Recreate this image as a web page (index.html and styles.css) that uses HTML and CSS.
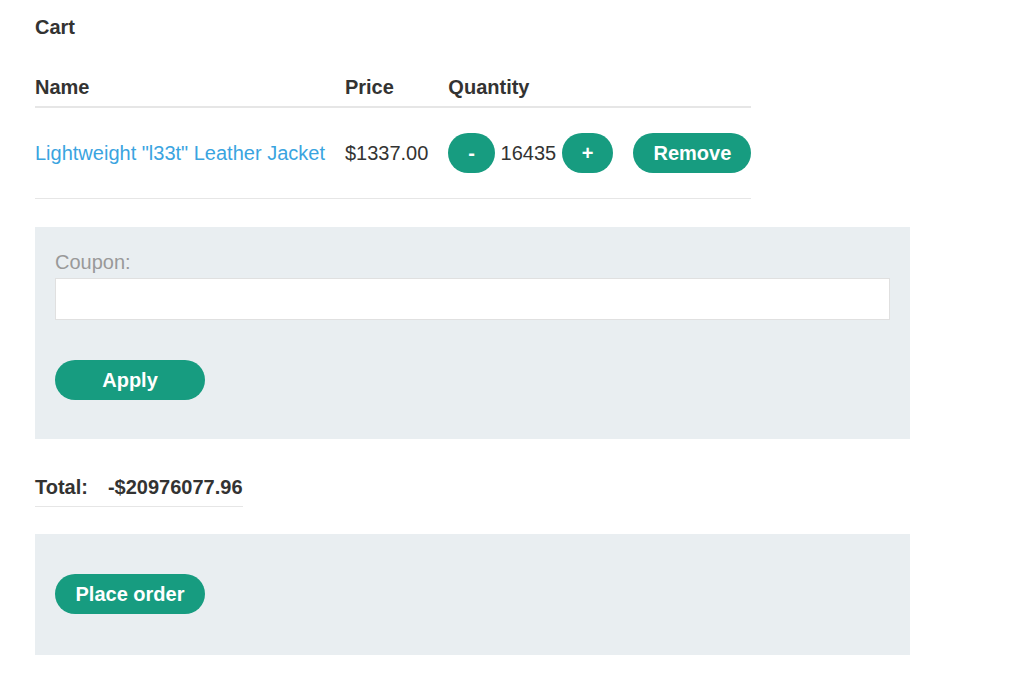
FILE: index.html
```html
<!DOCTYPE html>
<html>
<head>
<meta charset="utf-8">
<link rel="stylesheet" href="styles.css">
</head>
<body>
<div class="page">
  <h1 class="title">Cart</h1>
  <table class="cart">
    <thead>
      <tr><th>Name</th><th>Price</th><th>Quantity</th><th></th></tr>
    </thead>
    <tbody>
      <tr>
        <td><a class="product" href="#">Lightweight "l33t" Leather Jacket</a></td>
        <td>$1337.00</td>
        <td class="qty"><button class="btn">-</button> <span>16435</span> <button class="btn">+</button></td>
        <td><button class="btn">Remove</button></td>
      </tr>
    </tbody>
  </table>
  <form class="panel coupon">
    <label class="coupon-label">Coupon:</label>
    <input class="coupon-input" type="text">
    <button class="btn btn-wide" type="button">Apply</button>
  </form>
  <table class="total">
    <tr><th>Total:</th><th>-$20976077.96</th></tr>
  </table>
  <form class="panel order">
    <button class="btn btn-wide" type="button">Place order</button>
  </form>
</div>
</body>
</html>
```
FILE: styles.css
```css
html, body {
  margin: 0;
  padding: 0;
  background: #ffffff;
}
body {
  font-family: "Liberation Sans", Arial, sans-serif;
  font-size: 20px;
  color: #333332;
}
.page {
  width: 875px;
  padding: 16px 0 0 35px;
}
.title {
  margin: 0;
  font-size: 20px;
  font-weight: bold;
  line-height: 23px;
}
.cart {
  border-collapse: collapse;
  margin-top: 37px;
}
.cart th {
  text-align: left;
  font-weight: bold;
  line-height: 23px;
  padding: 0 20px 7px 0;
  border-bottom: 2px solid #e6e6e6;
}
.cart th:last-child,
.cart td:last-child {
  padding-right: 0;
}
.cart td {
  padding: 25px 20px 25px 0;
  border-bottom: 1px solid #e6e6e6;
  vertical-align: middle;
  line-height: 23px;
  white-space: nowrap;
}
.product {
  color: #3aa4df;
  text-decoration: none;
}
.btn {
  font-family: "Liberation Sans", Arial, sans-serif;
  font-size: 20px;
  font-weight: bold;
  color: #ffffff;
  background: #179c80;
  border: 0;
  border-radius: 20px;
  height: 40px;
  padding: 0 20px;
  line-height: 40px;
  vertical-align: middle;
  cursor: pointer;
}
.qty span {
  vertical-align: middle;
}
.panel {
  background: #e9eef1;
  margin: 28px 0 0 0;
  padding: 20px;
  display: flex;
  flex-direction: column;
  align-items: flex-start;
}
.coupon-label {
  color: #999999;
  line-height: 23px;
  margin-top: 4px;
  margin-bottom: 4px;
}
.coupon-input {
  box-sizing: border-box;
  width: 100%;
  height: 42px;
  border: 1px solid #e0e0e0;
  background: #ffffff;
  margin: 0;
  font-size: 20px;
  font-family: "Liberation Sans", Arial, sans-serif;
}
.btn-wide {
  min-width: 150px;
}
.coupon .btn-wide {
  margin: 40px 0 19px 0;
}
.total {
  border-collapse: collapse;
  margin-top: 30px;
}
.total th {
  text-align: left;
  font-weight: bold;
  line-height: 23px;
  padding: 7px 20px 7px 0;
  border-bottom: 1px solid #e6e6e6;
}
.total th:last-child {
  padding-right: 0;
}
.order {
  margin-top: 27px;
}
.order .btn-wide {
  margin: 20px 0 21px 0;
}
```
